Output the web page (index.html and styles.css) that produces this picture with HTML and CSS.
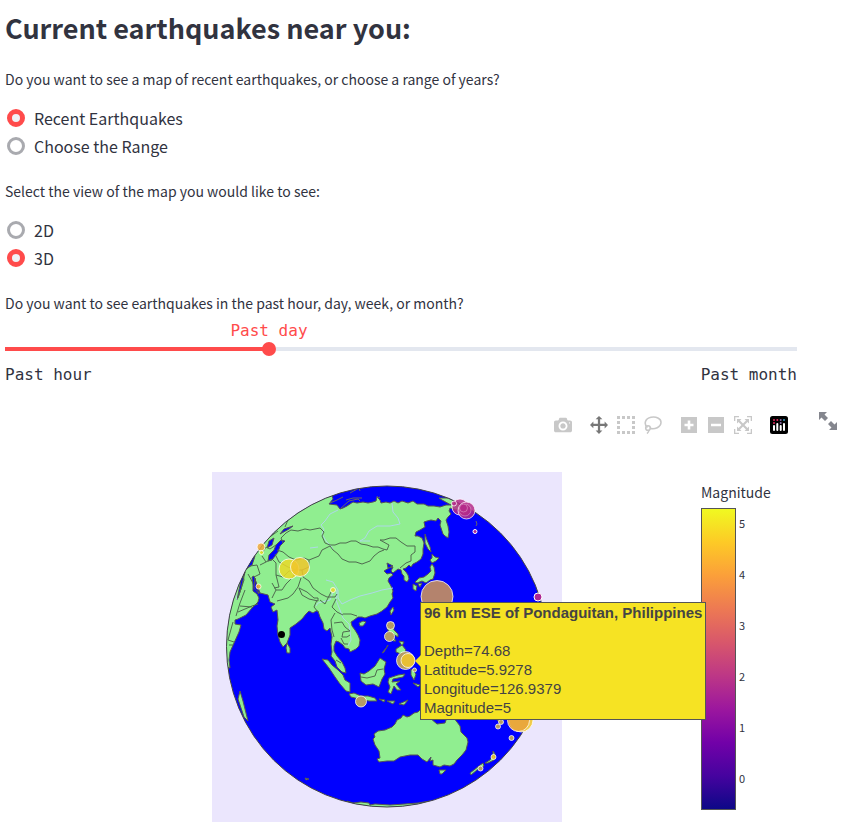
FILE: index.html
```html
<!DOCTYPE html>
<html lang="en">
<head>
<meta charset="utf-8">
<meta name="viewport" content="width=device-width, initial-scale=1">
<title>Current earthquakes</title>
<link rel="stylesheet" href="styles.css">
</head>
<body>
<main class="page">
  <h1 class="title">Current earthquakes near you:</h1>

  <fieldset class="field">
    <legend class="question">Do you want to see a map of recent earthquakes, or choose a range of years?</legend>
    <div class="options">
      <label class="option"><input type="radio" name="source" checked>Recent Earthquakes</label>
      <label class="option"><input type="radio" name="source">Choose the Range</label>
    </div>
  </fieldset>

  <fieldset class="field">
    <legend class="question">Select the view of the map you would like to see:</legend>
    <div class="options">
      <label class="option"><input type="radio" name="view">2D</label>
      <label class="option"><input type="radio" name="view" checked>3D</label>
    </div>
  </fieldset>

  <div class="period">
    <label class="question" for="period">Do you want to see earthquakes in the past hour, day, week, or month?</label>
    <output class="period-value" for="period">Past day</output>
    <input class="slider" id="period" type="range" min="0" max="3" step="1" value="1">
    <div class="period-ends"><span>Past hour</span><span>Past month</span></div>
  </div>

  <div class="toolbar">
    <div class="tools">
      <button class="tool" type="button" aria-label="Download plot as a png">
        <svg viewBox="0 0 1000 1000"><path transform="matrix(1 0 0 -1 0 850)" d="m500 450c-83 0-150-67-150-150 0-83 67-150 150-150 83 0 150 67 150 150 0 83-67 150-150 150z m400 150h-120c-16 0-34 13-39 29l-31 93c-6 15-23 28-40 28h-340c-16 0-34-13-39-28l-31-94c-6-15-23-28-40-28h-120c-55 0-100-45-100-100v-450c0-55 45-100 100-100h800c55 0 100 45 100 100v450c0 55-45 100-100 100z m-400-550c-138 0-250 112-250 250 0 138 112 250 250 250 138 0 250-112 250-250 0-138-112-250-250-250z m365 380c-19 0-35 16-35 35 0 19 16 35 35 35 19 0 35-16 35-35 0-19-16-35-35-35z"/></svg>
      </button>
    </div>
    <div class="tools">
      <button class="tool active" type="button" aria-label="Pan">
        <svg viewBox="0 0 1000 1000"><path transform="matrix(1 0 0 -1 0 850)" d="m1000 350l-187 188 0-125-250 0 0 250 125 0-188 187-187-187 125 0 0-250-250 0 0 125-188-188 186-187 0 125 252 0 0-250-125 0 187-188 188 188-125 0 0 250 250 0 0-126 187 188z"/></svg>
      </button>
      <button class="tool" type="button" aria-label="Box select">
        <svg viewBox="0 0 18 18"><path d="M0 0h3v3H0zM5 0h3v3H5zM10 0h3v3h-3zM15 0h3v3h-3zM0 5h3v3H0zM15 5h3v3h-3zM0 10h3v3H0zM15 10h3v3h-3zM0 15h3v3H0zM5 15h3v3H5zM10 15h3v3h-3zM15 15h3v3h-3z"/></svg>
      </button>
      <button class="tool" type="button" aria-label="Lasso select">
        <svg viewBox="0 0 18 18"><g fill="none" stroke="currentColor" stroke-width="1.6"><path d="M3.500 11.500C-.5 8 1 2.500 7 1.300c5-1 10 1 10 5 0 5-6.500 7.500-11 6"/><circle cx="4" cy="12" r="2.300"/><path d="M5 14c-.2 1.500-.8 2.500-2 3.500"/></g></svg>
      </button>
    </div>
    <div class="tools">
      <button class="tool" type="button" aria-label="Zoom in">
        <svg viewBox="0 0 18 18"><path fill-rule="evenodd" d="M1 1h16v16H1zM7.700 4.500v3.200H4.500v2.600h3.200v3.200h2.600v-3.200h3.200V7.700h-3.200V4.500z"/></svg>
      </button>
      <button class="tool" type="button" aria-label="Zoom out">
        <svg viewBox="0 0 18 18"><path fill-rule="evenodd" d="M1 1h16v16H1zM4 7.700v2.600h10V7.700z"/></svg>
      </button>
      <button class="tool" type="button" aria-label="Reset">
        <svg viewBox="0 0 18 18"><path d="M0 0h5v1.300H1.300V5H0zM13 0h5v5h-1.300V1.300H13zM0 13h1.300v3.700H5V18H0zM16.700 13H18v5h-5v-1.300h3.700zM3 3h4.500L6 4.500l3 3 3-3L10.500 3H15v4.500L13.500 6l-3 3 3 3 1.500-1.500V15h-4.500l1.500-1.500-3-3-3 3L7.500 15H3v-4.500L4.500 12l3-3-3-3L3 7.500z"/></svg>
      </button>
    </div>
    <div class="tools">
      <a class="tool" href="#" aria-label="Produced with Plotly">
        <svg viewBox="0 0 18 18"><rect width="18" height="18" rx="2.500" fill="#000"/><g fill="#fff"><rect x="3" y="9" width="2" height="6" rx="1"/><rect x="6.300" y="7" width="2" height="8" rx="1"/><rect x="9.700" y="9" width="2" height="6" rx="1"/><rect x="13" y="7" width="2" height="8" rx="1"/></g><g fill="#e8285f"><circle cx="4" cy="4" r="1"/><circle cx="4" cy="7" r="1"/><circle cx="7.300" cy="4" r="1"/></g><g fill="#8a6aa8"><circle cx="10.700" cy="4" r="1"/><circle cx="10.700" cy="7" r="1"/></g><circle cx="14" cy="4" r="1" fill="#3aa5c5"/></svg>
      </a>
    </div>
    <button class="fullscreen" type="button" aria-label="View fullscreen">
      <svg viewBox="0 0 18 18"><path d="M0 0h8L5.500 2.500 9 6 6 9 2.500 5.500 0 8zM18 18h-8l2.500-2.500L9 12l3-3 3.500 3.500L18 10z"/></svg>
    </button>
  </div>

  <section class="chart" aria-label="Earthquake map">
    <div class="map">
      <svg class="globe" viewBox="212 472 350 350" role="img" aria-label="Globe centred on Asia and Australia">
        <defs>
          <clipPath id="disc"><circle cx="387" cy="646.500" r="160.500"/></clipPath>
        </defs>
        <rect class="backdrop" x="212" y="472" width="350" height="350"/>
        <circle class="sea" cx="387" cy="646.500" r="160.500"/>
        <g clip-path="url(#disc)">
          <g class="land">
            <!-- Eurasia with Arabia and the Horn of Africa -->
            <path d="M215 665L215 560 255 500 300 475 330 488 333 499 329 504 337 505 340 509 343 508 347 506 353 502 357 503 363 502 368 503 373 502 376 501 377 497 380 500 381 503 386 502 390 503 394 501 398 503 402 501 408 503 413 501 417 504 424 504 428 506 434 506 440 507 446 505 451 505 442 500 439 498 448 498 457 502 463 508 456 510 450 508 449 511 451 514 448 517 446 520 448 526 449 532 448 538 445 536 443 534 441 528 440 525 441 521 438 518 436 521 431 520 427 521 424 522 425 527 420 530 416 532 415 536 418 536 422 538 424 543 423 549 423 554 421 559 417 562 413 564 411 567 409 565 406 568 403 569 406 572 408 575 409 579 407 582 404 580 404 576 402 574 401 570 398 569 393 573 391 571 393 567 389 568 384 571 387 574 391 573 393 575 389 578 388 581 391 586 393 591 392 594 393 598 390 602 387 607 382 611 377 614 370 616 365 618 362 617 358 617 354 620 351 622 352 626 355 630 358 635 360 640 359 646 356 649 350 652 349 649 345 648 343 645 339 642 336 641 334 646 334 651 337 656 342 662 345 668 346 673 342 672 337 667 335 661 331 656 332 652 331 644 332 637 330 628 327 631 324 629 323 623 320 617 318 611 316 611 313 613 309 611 306 614 302 619 296 624 290 628 290 635 287 643 283 647 280 642 278 635 277 626 278 620 277 610 273 612 271 607 275 604 270 602 268 595 264 594 260 593 257 585 254 576 252 577 253 585 253 591 257 594 259 598 258 602 252 608 246 615 238 619 235 620 235 624 241 625 239 632 234 643 230 652 229 660 230 668z"/>
            <!-- Sakhalin and Japan -->
            <path d="M425 534L427 540 430 547 431 552 428 549 425 543zM432 554L435 557 439 558 436 561 432 563 430 560 432 558zM432 564L434 567 435 573 433 579 430 580 426 583 422 581 417 583 415 582 419 578 424 577 428 574 431 571 430 567zM413 584L417 586 416 591 413 589zM418 584L422 583 420 587z"/>
            <!-- Taiwan, Hainan, Sri Lanka -->
            <path d="M393 607L394 610 391 615 390 611zM359 623L363 621 366 622 363 626 360 626zM287 643L290 648 290 653 287 653 286 648z"/>
            <!-- Philippines -->
            <path d="M389 624L393 624 394 630 398 634 398 637 393 634 389 632 387 628zM388 645L384 652 382 653 387 647zM393 637L396 641 393 641zM399 641L404 642 402 646zM396 649L402 645 406 650 403 655 396 652z"/>
            <!-- Sumatra, Java and the Lesser Sundas -->
            <path d="M322 659L328 660 332 665 338 670 343 675 345 680 350 683 350 692 346 691 340 684 335 677 329 668zM349 694L354 693 361 696 368 696 375 698 377 701 369 701 359 699 351 697zM379 699L385 700 384 702zM387 701L395 701 393 704zM399 704L408 700 404 705z"/>
            <!-- Borneo and Sulawesi -->
            <path d="M360 673L364 674 369 671 375 666 380 658 386 662 384 669 385 674 382 679 379 687 373 684 366 685 361 681zM389 678L398 675 405 674 403 677 393 679 392 682 400 681 396 684 401 690 397 690 394 686 391 694 388 692 390 687 388 682zM411 669L416 674 414 680 411 675zM413 683L420 685 418 687z"/>
            <!-- Australia, Tasmania, New Zealand -->
            <path d="M374 734L378 731 385 730 392 727 395 724 397 720 401 718 403 715 407 717 410 716 414 713 418 712 421 709 430 713 430 718 437 724 445 723 449 712 457 722 460 726 461 732 467 738 468 742 466 750 462 755 457 760 454 764 450 766 444 765 440 767 433 765 433 760 430 761 431 757 427 762 422 759 418 755 410 755 400 757 394 761 387 761 379 762 377 759 380 758 379 751 375 745 373 739 375 737zM439 770L446 770 442 774 440 774zM470 773L479 766 483 763 484 766 477 770 471 775zM485 763L490 760 493 756 493 751 495 754 494 760 488 763z"/>
            <path d="M478 706L484 715 481 712zM494 714L501 723 497 720z"/>
            <!-- Madagascar, Antarctica, Kerguelen -->
            <path d="M240 691L243 701 248 721 244 717 238 699zM347 801L353 803 361 802 369 803 370 805 375 804 390 805 405 804 418 803 430 801 430 812 345 812zM305 778L309 779 306 780z"/>
          </g>
          <g class="sea-inland">
            <path d="M285 541L280 546 278 552 272 560 268 561 269 555 274 550 276 545 281 540zM274 538L272 545 267 548 269 541zM255 556L252 565 245 570 249 562zM245 572L241 589 237 600 241 580zM293 526L284 529 280 534 289 529zM255 578L257 588 259 594 254 588z"/>
            <path d="M387 563L393 566 388 568z"/>
          </g>
          <g class="islets">
            <path d="M330 503L337 500 343 497M341 508L349 501 358 499 360 501M350 493L359 488 360 491M377 496L378 498 380 497M346 500L353 498 362 498M476 521L477 524 476 526"/>
          </g>
          <g class="rivers">
            <path d="M338 510L330 514 325 521 321 525 324 529 322 534 326 541 330 545 333 549M392 503L393 512 398 518 400 524 390 526 377 526 369 531 365 538 360 541 370 541M326 580L333 582 338 590 338 598 342 604 350 600 360 596 372 593 382 590 393 588M333 592L330 600 318 603 316 606M337 590L336 600 340 610 343 618 349 624 350 631 351 640 348 646M240 570L235 592 237 600M310 548L318 547"/>
          </g>
          <g class="borders">
            <path d="M283 543L281 538 286 533 291 530 298 531 305 529 310 530 320 528 324 532 322 536 325 543 330 545 335 545 340 543 346 543 351 541 356 541 361 544 367 545 373 547 378 547 383 549 387 550 389 545 380 540 384 540 390 538 396 538 401 542 407 546 415 546 415 552 411 555 411 561 406 563 400 568"/>
            <path d="M330 546L333 550 338 554 342 559 349 562 356 562 362 564 370 561 374 556 379 552 384 550"/>
            <path d="M330 546L322 550 319 556 309 560 309 567 302 570 303 577 309 581 313 588 321 594 327 597 335 597 337 594"/>
            <path d="M277 550L283 552 289 557 296 560 304 558 309 560M275 554L279 562 288 567 296 570 302 570M262 556L266 562 272 559 276 563 276 575 279 587 274 588M276 575L283 577 289 571 296 570M297 567L293 577 286 584 282 590 276 590 272 598M276 590L272 583M262 553L266 547 270 549 276 545M250 566L257 565 260 574 254 577M260 565L266 562"/>
            <path d="M248 574L253 583M245 590L240 603 236 616M238 612L252 606 258 604M240 606L252 607M233 622L228 640 234 642M229 645L233 645"/>
            <path d="M301 578L298 587 293 594 288 598 277 601M299 588L307 592 314 598 318 598 318 601 309 599 302 595zM317 600L314 607 318 612M320 600L325 604 331 592M336 599L332 607 337 612 343 615M335 613L331 620 332 630 334 637M334 623L342 622 345 627 350 631 343 632 342 637 347 637 350 635M341 638L344 644 348 644M343 614L351 614 357 616M336 660L341 663M361 677L367 678 375 676 377 670 383 669"/>
            <path d="M238 573L232 596 228 618M242 565L244 580 238 598M270 536L258 547 249 563M278 531L263 542M280 523L272 535M290 515L285 527M303 505L297 514"/>
          </g>
        </g>
        <circle class="rim" cx="387" cy="646.500" r="160.500"/>
        <g class="quakes">
          <circle class="orange" cx="261" cy="547" r="4"/>
          <circle class="yellow" cx="261.500" cy="552.500" r="2"/>
          <circle class="yellow" cx="289" cy="569" r="10"/>
          <circle class="gold" cx="300" cy="567" r="9.500"/>
          <circle class="orange" cx="258.500" cy="586.500" r="2.500"/>
          <circle class="yellow" cx="333" cy="590" r="2.500"/>
          <circle class="tan" cx="390.500" cy="625.500" r="4"/>
          <circle class="tan" cx="389.500" cy="636.500" r="5"/>
          <circle class="tan" cx="361" cy="701.500" r="5.500"/>
          <circle class="tan" cx="405.500" cy="660.500" r="9"/>
          <circle class="gold" cx="408" cy="660.500" r="7"/>
          <circle class="tan" cx="414.500" cy="670" r="2"/>
          <circle class="brown" cx="437" cy="596.500" r="16"/>
          <circle class="plum" cx="460" cy="507" r="8"/>
          <circle class="plum" cx="454" cy="503.500" r="2.500"/>
          <circle class="plum" cx="466.500" cy="510.500" r="8.500"/>
          <circle class="plum faint" cx="465" cy="510" r="6"/>
          <circle class="plum faint" cx="463.500" cy="508" r="4"/>
          <circle class="magenta" cx="475" cy="531.500" r="2"/>
          <circle class="magenta" cx="538" cy="597" r="4"/>
          <circle class="gold" cx="521" cy="720" r="12"/>
          <circle class="orange" cx="518.500" cy="720.500" r="11"/>
          <circle class="tan" cx="498" cy="726.500" r="2.500"/>
          <circle class="tan" cx="501" cy="722" r="2.500"/>
          <circle class="tan" cx="511.500" cy="738" r="2.500"/>
          <circle class="gold" cx="493.500" cy="757" r="2.500"/>
          <circle class="tan" cx="480.500" cy="768.500" r="2.500"/>
        </g>
        <circle cx="281.500" cy="634.500" r="3.500"/>
      </svg>
      <div class="tooltip" role="tooltip">
        <strong>96 km ESE of Pondaguitan, Philippines</strong><br><br>
        Depth=74.68<br>
        Latitude=5.9278<br>
        Longitude=126.9379<br>
        Magnitude=5
      </div>
    </div>
    <aside class="legend">
      <h2 class="legend-title">Magnitude</h2>
      <div class="scale">
        <div class="ramp"></div>
        <ol class="ticks"><li>5</li><li>4</li><li>3</li><li>2</li><li>1</li><li>0</li></ol>
      </div>
    </aside>
  </section>
</main>
</body>
</html>
```
FILE: styles.css
```css
* { box-sizing: border-box; }

body {
  margin: 0;
  background: #fff;
  color: #31333f;
  font-family: "Noto Sans CJK SC", "Noto Sans", sans-serif;
  font-size: 14px;
}

.page { padding: 0 47px 0 5px; }

.title {
  margin: 0;
  padding-bottom: 4px;
  font-size: 27px;
  font-weight: 700;
  line-height: 56px;
}

.field {
  min-width: 0;
  margin: 8px 0 20px;
  padding: 0;
  border: 0;
}

.question {
  display: block;
  padding: 0 0 2px;
  line-height: 22px;
}

.options {
  display: flex;
  flex-direction: column;
  padding-top: 12px;
}

.field + .field { margin-top: 0; }

.option {
  display: flex;
  align-items: center;
  gap: 9px;
  height: 28px;
  padding-left: 2px;
  font-size: 16px;
}

.option input {
  appearance: none;
  width: 18px;
  height: 18px;
  margin: 0;
  border: 3px solid #a9aaaf;
  border-radius: 50%;
  background: #fff;
}

.option input:checked {
  border: 5px solid #ff4b4b;
  background: #f0f2f6;
}

.period-value,
.period-ends {
  font-family: "DejaVu Sans Mono", monospace;
  font-size: 16px;
  line-height: 20px;
}

.period-value {
  display: block;
  width: 66.666%;
  margin-top: 5px;
  color: #ff4b4b;
  text-align: center;
}

.slider {
  appearance: none;
  display: block;
  width: calc(100% + 14px);
  height: 16px;
  margin: 0 -7px;
  background: linear-gradient(to right, #ff4b4b 33.333%, #e3e7ef 33.333%) 7px 6px / calc(100% - 14px) 4px no-repeat;
}

.slider::-webkit-slider-thumb {
  appearance: none;
  width: 14px;
  height: 14px;
  border-radius: 50%;
  background: #ff4b4b;
}

.period-ends {
  display: flex;
  justify-content: space-between;
  margin-top: 8px;
}

.toolbar {
  display: flex;
  justify-content: flex-end;
  align-items: center;
  gap: 9px;
  height: 20px;
  margin: 30px -40px 0 0;
}

.tools { display: flex; }

.tool {
  display: grid;
  place-items: center;
  width: 27px;
  height: 20px;
  padding: 0;
  border: 0;
  background: none;
  color: #c8c8c8;
}

.tool.active { color: #777; }

.tool svg,
.fullscreen svg {
  display: block;
  width: 18px;
  height: 18px;
  fill: currentColor;
}

.fullscreen {
  align-self: flex-start;
  margin: -3px 0 0 18px;
  padding: 0;
  border: 0;
  background: none;
  color: #84868e;
}

.chart {
  display: flex;
  margin-top: 37px;
  padding-left: 68px;
}

.map {
  position: relative;
  width: 350px;
  margin: 0 auto;
}

.globe { display: block; width: 100%; }

.backdrop { fill: #ebe6fd; }
.sea { fill: #00f; }
.land { fill: #90ee90; stroke: #555; stroke-width: 1; stroke-linejoin: round; }
.sea-inland { fill: #00f; stroke: #555; stroke-width: 1; }
.islets { fill: none; stroke: #666; stroke-width: 1; }
.rivers { fill: none; stroke: #add8e6; stroke-width: 1; }
.borders { fill: none; stroke: #4f6b4f; stroke-width: 1; stroke-linejoin: round; }
.rim { fill: none; stroke: #444; stroke-width: 1; }

.quakes { stroke: #fff; stroke-opacity: .75; stroke-width: 1; }
.yellow { fill: #ead928; fill-opacity: .85; }
.gold { fill: #f1c52b; fill-opacity: .85; }
.orange { fill: #eda83a; fill-opacity: .85; }
.tan { fill: #b49b65; }
.brown { fill: #b4836d; }
.plum { fill: #b52c8a; fill-opacity: .85; }
.faint { stroke-opacity: .3; }
.magenta { fill: #ac2694; stroke-opacity: 1; }

.tooltip {
  position: absolute;
  top: 130px;
  left: 208px;
  padding: 0 3px 2px;
  border: 1px solid #555;
  background: #f6e323;
  color: #444;
  font-family: "Liberation Sans", Arial, sans-serif;
  font-size: 15px;
  line-height: 19px;
  white-space: nowrap;
}

.tooltip::before {
  content: "";
  position: absolute;
  top: 52px;
  left: -6px;
  border: 6px solid transparent;
  border-right-color: #f6e323;
  border-left: 0;
}

.legend { width: 96px; padding-top: 10px; }

.legend-title {
  margin: 0;
  font-size: 14px;
  font-weight: 400;
  line-height: 20px;
}

.scale {
  display: flex;
  gap: 3px;
  margin-top: 6px;
}

.ramp {
  width: 35px;
  height: 302px;
  border: 1px solid #555;
  background: linear-gradient(to top, #0d0887, #46039f, #7201a8, #9c179e, #bd3786, #d8576b, #ed7953, #fb9f3a, #fdca26, #f0f921);
}

.ticks {
  margin: -10px 0 0;
  padding: 0;
  list-style: none;
  font-size: 11px;
  line-height: 51px;
}
```
